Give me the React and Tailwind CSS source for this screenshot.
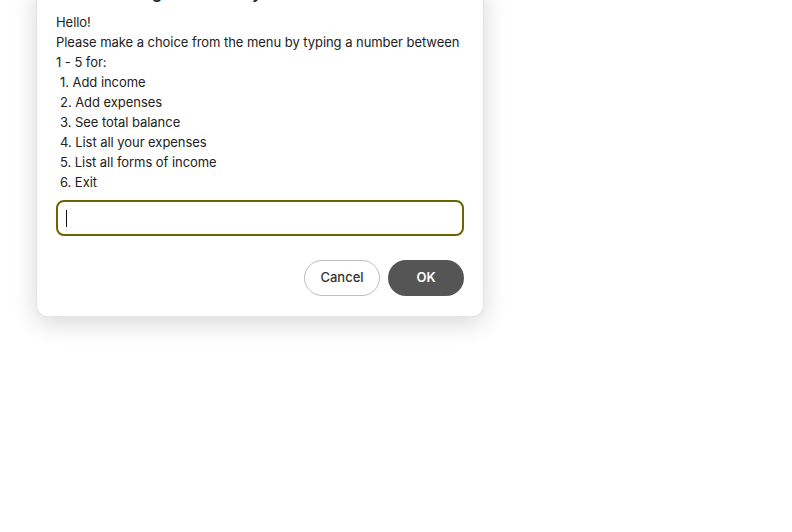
const items = [
  '1. Add income',
  '2. Add expenses',
  '3. See total balance',
  '4. List all your expenses',
  '5. List all forms of income',
  '6. Exit',
];

const PromptDialog = () => (
  <div className="ml-9 -mt-[17px] w-[448px] rounded-[12px] border border-black/10 bg-white px-[19px] pb-5 shadow-[0_6px_24px_rgba(0,0,0,0.16)]">
    <div className="h-5 text-[15px] font-bold leading-5 text-[#222]">Personal budget tracker says</div>
    <div className="mt-2 text-[13px] leading-5 tracking-[-0.05px] text-[#222]">
      <div>Hello!</div>
      <div>Please make a choice from the menu by typing a number between</div>
      <div>1 - 5 for:</div>
      {items.map((item) => (
        <div key={item} className="pl-1">{item}</div>
      ))}
    </div>
    <div className="mt-2 flex h-9 items-center rounded-lg border-2 border-[#6b6400] px-[8px]">
      <span className="h-[17px] w-px bg-[#111]" />
    </div>
    <div className="mt-6 flex justify-end gap-2">
      <button className="h-9 w-[76px] rounded-full border border-[#bdbdbd] bg-white text-[13px] font-medium text-[#333]">
        Cancel
      </button>
      <button className="h-9 w-[76px] rounded-full bg-[#555555] text-[13px] font-semibold text-white">
        OK
      </button>
    </div>
  </div>
);

export default function App() {
  return (
    <div className="h-[532px] w-[792px] overflow-hidden bg-white" style={{ fontFamily: 'Inter, "Noto Sans", sans-serif' }}>
      <PromptDialog />
    </div>
  );
}
